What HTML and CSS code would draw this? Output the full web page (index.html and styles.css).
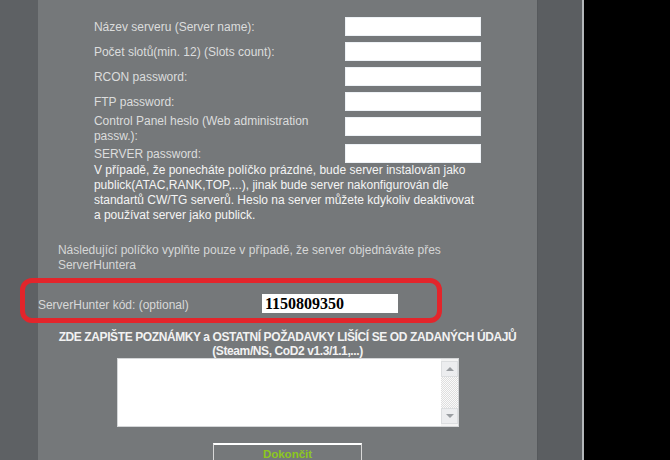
FILE: index.html
```html
<!DOCTYPE html>
<html lang="cs">
<head>
    <meta charset="UTF-8">
    <meta name="viewport" content="width=device-width, initial-scale=1.0">
    <title>Objednávka serveru</title>
    <link rel="stylesheet" href="styles.css">
</head>
<body>
    <div class="page">
        <div class="side side-left"></div>

        <div class="panel">
            <!-- Server settings -->
            <form class="order" action="#" method="POST">
                <div class="row">
                    <label class="label">Název serveru (Server name):</label>
                    <input type="text" class="field">
                </div>
                <div class="row">
                    <label class="label">Počet slotů(min. 12) (Slots count):</label>
                    <input type="text" class="field">
                </div>
                <div class="row">
                    <label class="label">RCON password:</label>
                    <input type="text" class="field">
                </div>
                <div class="row">
                    <label class="label">FTP password:</label>
                    <input type="text" class="field">
                </div>
                <div class="row row-tall">
                    <label class="label">Control Panel heslo (Web administration passw.):</label>
                    <input type="text" class="field">
                </div>
                <div class="row row-last">
                    <label class="label">SERVER password:</label>
                    <input type="text" class="field">
                </div>

                <p class="note">V případě, že ponecháte políčko prázdné, bude server instalován jako publick(ATAC,RANK,TOP,...), jinak bude server nakonfigurován dle standartů CW/TG serverů. Heslo na server můžete kdykoliv deaktivovat a používat server jako publick.</p>

                <p class="hint">Následující políčko vyplňte pouze v případě, že server objednáváte přes ServerHuntera</p>

                <div class="hunter">
                    <label class="hunter-label">ServerHunter kód: (optional)</label>
                    <input type="text" class="hunter-field" value="1150809350">
                </div>

                <h3 class="notes-title">ZDE ZAPIŠTE POZNÁMKY a OSTATNÍ POŽADAVKY LIŠÍCÍ SE OD ZADANÝCH ÚDAJŮ<br>(Steam/NS, CoD2 v1.3/1.1,...)</h3>

                <div class="notes">
                    <textarea class="notes-text"></textarea>
                    <div class="scrollbar">
                        <span class="scroll-btn"><span class="arrow-up"></span></span>
                        <span class="scroll-track"></span>
                        <span class="scroll-btn"><span class="arrow-down"></span></span>
                    </div>
                </div>

                <div class="actions">
                    <button type="submit" class="submit">Dokončit</button>
                </div>
            </form>
        </div>

        <div class="side side-right"></div>

        <!-- highlight drawn over the screenshot -->
        <div class="highlight"></div>
    </div>
</body>
</html>
```

FILE: styles.css
```css
/* Basic styling for the order page */
body {
    margin: 0;
    background-color: #000;
    font-family: "Liberation Sans", Arial, sans-serif;
    font-size: 12px;
    overflow: hidden;
}

.page {
    position: relative;
    display: flex;
    width: 582px;
    min-height: 460px;
    border-right: 2px solid #b4b8ba;
}

.side-left {
    width: 38px;
    background-color: #5e6164;
}

.side-right {
    width: 44px;
    background-color: #5b5e61;
    border-left: 1px solid #56595c;
}

.panel {
    width: 500px;
    background-color: #75787a;
}

.order {
    padding-top: 17px;
}

.row {
    display: flex;
    align-items: center;
    height: 19px;
    margin: 0 0 6px 56px;
}

.row-tall {
    margin-top: 1px;
    margin-bottom: 8px;
}

.row-tall .label {
    padding-top: 5px;
}

.row-last {
    margin-bottom: 0;
}

.label {
    width: 251px;
    padding-top: 2px;
    color: #dcdddd;
    line-height: 15px;
}

.field {
    width: 136px;
    height: 19px;
    box-sizing: border-box;
    border: 1px solid #eef2f6;
    background-color: #fff;
    padding: 0 2px;
}

.note {
    width: 387px;
    margin: 0 0 0 56px;
    color: #f4f4f4;
    line-height: 15px;
}

.hint {
    width: 400px;
    margin: 20px 0 0 20px;
    color: #d6d7d7;
    line-height: 15px;
}

.hunter {
    display: flex;
    align-items: center;
    margin-top: 21px;
    height: 19px;
}

.hunter-label {
    width: 224px;
    padding-top: 2px;
    color: #d8d9d9;
}

.hunter-field {
    width: 136px;
    height: 19px;
    box-sizing: border-box;
    border: none;
    padding: 0 3px;
    font-family: "Liberation Serif", "Times New Roman", serif;
    font-size: 16px;
    font-weight: bold;
    color: #000;
}

.notes-title {
    margin: 17px 0 0;
    text-align: center;
    color: #f2f2f2;
    font-size: 12px;
    line-height: 14px;
    letter-spacing: -0.4px;
}

.notes {
    display: flex;
    width: 342px;
    height: 69px;
    box-sizing: border-box;
    margin: 0 auto;
    border: 1px solid #d4d6d8;
    background-color: #fff;
}

.notes-text {
    flex: 1;
    border: none;
    resize: none;
    outline: none;
}

.scrollbar {
    display: flex;
    flex-direction: column;
    width: 17px;
    padding: 2px 0;
    background-color: #f4f4f4;
}

.scroll-btn {
    position: relative;
    height: 16px;
    background-color: #ecedef;
    border: 1px solid #dcdee0;
    box-sizing: border-box;
}

.scroll-track {
    flex: 1;
    background-color: #f6f6f6;
    background-image: repeating-conic-gradient(#dedede 0 25%, #fafafa 0 50%);
    background-size: 2px 2px;
}

.arrow-up,
.arrow-down {
    position: absolute;
    left: 4px;
    top: 5px;
    width: 0;
    height: 0;
    border-left: 4px solid transparent;
    border-right: 4px solid transparent;
}

.arrow-up {
    border-bottom: 4px solid #9a9ea2;
}

.arrow-down {
    border-top: 4px solid #9a9ea2;
}

.actions {
    margin-top: 16px;
    text-align: center;
}

.submit {
    width: 149px;
    height: 26px;
    background-color: #75787a;
    border: 1px solid #d8d8d8;
    border-top: 2px solid #fff;
    color: #8cc81e;
    font-family: "Liberation Sans", Arial, sans-serif;
    font-size: 11.5px;
    font-weight: bold;
    padding: 0 0 5px;
}

.highlight {
    position: absolute;
    left: 20px;
    top: 278px;
    width: 422px;
    height: 45px;
    box-sizing: border-box;
    border: 5px solid #e3252b;
    border-radius: 12px;
}
```
